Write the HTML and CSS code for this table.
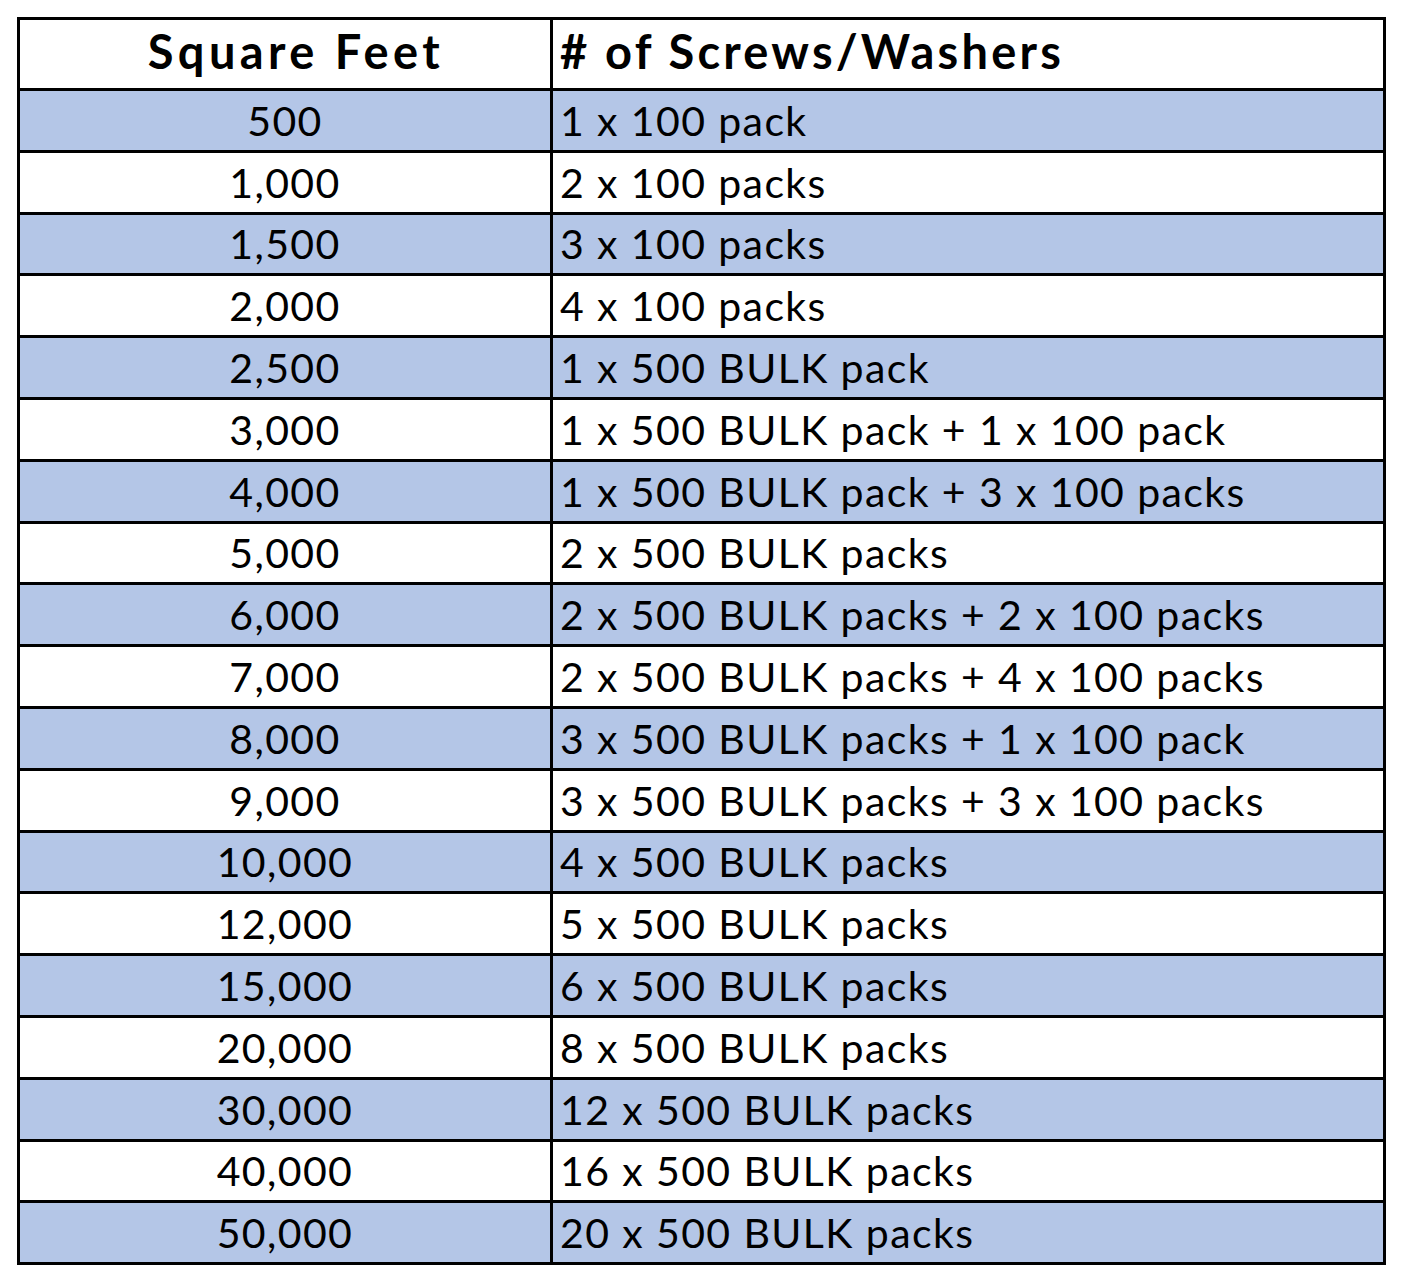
FILE: index.html
```html
<!DOCTYPE html>
<html>
<head>
<meta charset="utf-8">
<link rel="stylesheet" href="styles.css">
</head>
<body>
<table class="chart">
<colgroup><col class="c1"><col class="c2"></colgroup>
<thead>
<tr class="head"><th class="sq">Square Feet</th><th class="sw"># of Screws/Washers</th></tr>
</thead>
<tbody>
<tr class="alt"><td class="sq">500</td><td class="sw">1 x 100 pack</td></tr>
<tr><td class="sq">1,000</td><td class="sw">2 x 100 packs</td></tr>
<tr class="alt"><td class="sq">1,500</td><td class="sw">3 x 100 packs</td></tr>
<tr><td class="sq">2,000</td><td class="sw">4 x 100 packs</td></tr>
<tr class="alt"><td class="sq">2,500</td><td class="sw">1 x 500 BULK pack</td></tr>
<tr><td class="sq">3,000</td><td class="sw">1 x 500 BULK pack + 1 x 100 pack</td></tr>
<tr class="alt"><td class="sq">4,000</td><td class="sw">1 x 500 BULK pack + 3 x 100 packs</td></tr>
<tr><td class="sq">5,000</td><td class="sw">2 x 500 BULK packs</td></tr>
<tr class="alt"><td class="sq">6,000</td><td class="sw">2 x 500 BULK packs + 2 x 100 packs</td></tr>
<tr><td class="sq">7,000</td><td class="sw">2 x 500 BULK packs + 4 x 100 packs</td></tr>
<tr class="alt"><td class="sq">8,000</td><td class="sw">3 x 500 BULK packs + 1 x 100 pack</td></tr>
<tr><td class="sq">9,000</td><td class="sw">3 x 500 BULK packs + 3 x 100 packs</td></tr>
<tr class="alt"><td class="sq">10,000</td><td class="sw">4 x 500 BULK packs</td></tr>
<tr><td class="sq">12,000</td><td class="sw">5 x 500 BULK packs</td></tr>
<tr class="alt"><td class="sq">15,000</td><td class="sw">6 x 500 BULK packs</td></tr>
<tr><td class="sq">20,000</td><td class="sw">8 x 500 BULK packs</td></tr>
<tr class="alt"><td class="sq">30,000</td><td class="sw">12 x 500 BULK packs</td></tr>
<tr><td class="sq">40,000</td><td class="sw">16 x 500 BULK packs</td></tr>
<tr class="alt"><td class="sq">50,000</td><td class="sw">20 x 500 BULK packs</td></tr>
</tbody>
</table>
</body>
</html>
```
FILE: styles.css
```css
html, body {
  margin: 0;
  padding: 0;
  background: #ffffff;
}
body {
  padding: 17px 0 0 17px;
  font-family: Lato, "Open Sans", sans-serif;
  color: #000000;
}
.chart {
  border-collapse: collapse;
  width: 1366px;
  table-layout: fixed;
  border: 3px solid #000;
}
.c1 { width: 533px; }
.c2 { width: 833px; }
.chart th, .chart td {
  border: 3px solid #000;
  padding: 0 7px;
  white-space: nowrap;
  vertical-align: middle;
}
.head { height: 71px; }
.chart th {
  font-weight: 700;
  font-size: 47px;
  letter-spacing: 3.2px;
  line-height: 1;
  padding-bottom: 6px;
  background: #fff;
}
.chart th.sq {
  letter-spacing: 4.4px;
  padding-left: 29px;
}
.chart tbody tr { height: 61.8px; }
.chart td {
  font-size: 41px;
  letter-spacing: 1.4px;
  font-weight: 400;
}
.alt td { background: #b4c6e7; }
.sq { text-align: center; }
.sw { text-align: left; }
```
